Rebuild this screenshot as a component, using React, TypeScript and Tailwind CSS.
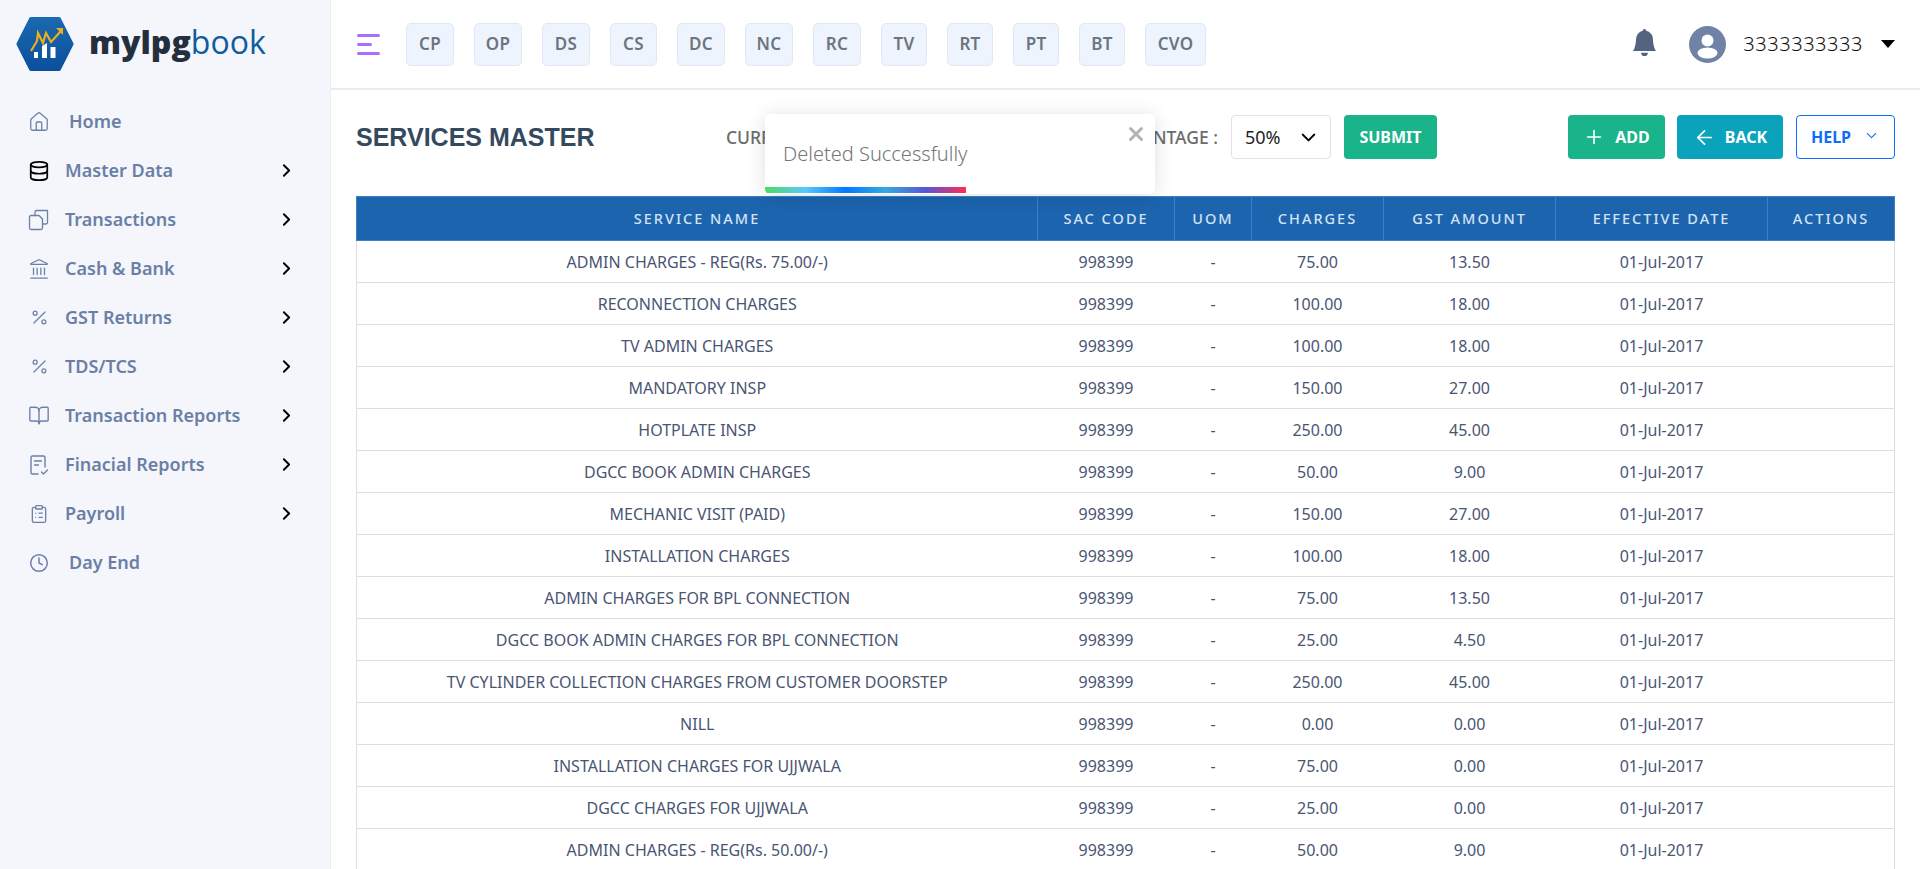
import { ArrowLeft, BookOpen, ChevronDown, ChevronRight, Clock, ClipboardList, Database, House, Landmark, Percent, Plus, X } from "lucide-react"
import { BsBellFill } from "react-icons/bs"

const chips = [
  { label: "CP", w: "w-[48px]" },
  { label: "OP", w: "w-[48px]" },
  { label: "DS", w: "w-[48px]" },
  { label: "CS", w: "w-[47px]" },
  { label: "DC", w: "w-[48px]" },
  { label: "NC", w: "w-[48px]" },
  { label: "RC", w: "w-[48px]" },
  { label: "TV", w: "w-[46px]" },
  { label: "RT", w: "w-[46px]" },
  { label: "PT", w: "w-[46px]" },
  { label: "BT", w: "w-[46px]" },
  { label: "CVO", w: "w-[61px]" },
]

const rows = [
  ["ADMIN CHARGES - REG(Rs. 75.00/-)", "75.00", "13.50"],
  ["RECONNECTION CHARGES", "100.00", "18.00"],
  ["TV ADMIN CHARGES", "100.00", "18.00"],
  ["MANDATORY INSP", "150.00", "27.00"],
  ["HOTPLATE INSP", "250.00", "45.00"],
  ["DGCC BOOK ADMIN CHARGES", "50.00", "9.00"],
  ["MECHANIC VISIT (PAID)", "150.00", "27.00"],
  ["INSTALLATION CHARGES", "100.00", "18.00"],
  ["ADMIN CHARGES FOR BPL CONNECTION", "75.00", "13.50"],
  ["DGCC BOOK ADMIN CHARGES FOR BPL CONNECTION", "25.00", "4.50"],
  ["TV CYLINDER COLLECTION CHARGES FROM CUSTOMER DOORSTEP", "250.00", "45.00"],
  ["NILL", "0.00", "0.00"],
  ["INSTALLATION CHARGES FOR UJJWALA", "75.00", "0.00"],
  ["DGCC CHARGES FOR UJJWALA", "25.00", "0.00"],
  ["ADMIN CHARGES - REG(Rs. 50.00/-)", "50.00", "9.00"],
]

const columns = [
  { label: "SERVICE NAME", w: "w-[681px]" },
  { label: "SAC CODE", w: "w-[137px]" },
  { label: "UOM", w: "w-[77px]" },
  { label: "CHARGES", w: "w-[132px]" },
  { label: "GST AMOUNT", w: "w-[172px]" },
  { label: "EFFECTIVE DATE", w: "w-[212px]" },
  { label: "ACTIONS", w: "w-[127px]" },
]

function ReportIcon() {
  return (
    <svg width="22" height="22" viewBox="0 0 22 22" fill="none" stroke="currentColor" strokeWidth="1.4" strokeLinecap="round" strokeLinejoin="round">
      <path d="M10 20H4.500A1.500 1.500 0 0 1 3 18.500v-15A1.500 1.500 0 0 1 4.500 2h11A1.500 1.500 0 0 1 17 3.500V13" />
      <path d="M6.500 7h7M6.500 11h4M13.500 18l2 2 4-4" />
    </svg>
  )
}

function FilesIcon() {
  return (
    <svg width="22" height="22" viewBox="0 0 22 22" fill="none" stroke="currentColor" strokeWidth="1.3" strokeLinecap="round" strokeLinejoin="round">
      <path d="M7 6.500V3a1.500 1.500 0 0 1 1.500-1.500H14l5.500 0v12a1.500 1.500 0 0 1-1.500 1.500h-3.500" />
      <path d="M7 6.500H3a1.500 1.500 0 0 0-1.500 1.500v11A1.500 1.500 0 0 0 3 20.500h10a1.500 1.500 0 0 0 1.500-1.500V10" />
      <path d="M7 6.500h4l3.500 3.500" />
    </svg>
  )
}

function Logo() {
  return (
    <svg width="58" height="58" viewBox="0 0 58 58">
      <defs>
        <linearGradient id="hex" x1="0" y1="0" x2="0" y2="1">
          <stop offset="0" stopColor="#1b69b0" />
          <stop offset="1" stopColor="#0a4f9c" />
        </linearGradient>
      </defs>
      <path d="M15 1h28a2 2 0 0 1 1.700 1l12.600 25a2 2 0 0 1 0 2l-12.600 25a2 2 0 0 1-1.700 1H15a2 2 0 0 1-1.700-1L.700 29a2 2 0 0 1 0-2l12.600-25a2 2 0 0 1 1.700-1z" fill="url(#hex)" />
      <path d="M18 42h4v-6h-4zM26 42h5V27l-5 3zM34.500 42h5V31h-5z" fill="#fff" />
      <path d="M15 35 21 25l1-8 5 10 3-10 5 9 10-11" fill="none" stroke="#f0ae1c" strokeWidth="2.200" />
      <path d="M40 12h7v7z" fill="#f0ae1c" />
    </svg>
  )
}

function NavItem({ icon, label, arrow, wide }: { icon: React.ReactNode; label: string; arrow?: boolean; wide?: boolean }) {
  return (
    <div className="flex h-[49px] items-center pl-[28px] pr-[33px]">
      <span className={`flex w-[22px] justify-center text-[#6c80a8] ${wide ? "mr-[19px]" : "mr-[15px]"}`}>{icon}</span>
      <span className="flex-1 text-[18px] font-semibold text-[#6b7fa6]">{label}</span>
      {arrow && <ChevronRight size={21} strokeWidth={2.2} className="text-black" />}
    </div>
  )
}

export default function App() {
  return (
    <div className="flex h-screen overflow-hidden bg-white font-['Noto_Sans',sans-serif]">
      <aside className="w-[331px] shrink-0 border-r border-[#e9ecf3] bg-[#f4f6fb]">
        <div className="flex h-[97px] items-start pl-[16px] pt-[16px]">
          <Logo />
          <span className="ml-[15px] mt-[6px] font-['Open_Sans',sans-serif] text-[32px] leading-[40px] text-[#0f5c9e]">
            <span className="font-extrabold text-[#242f3e]">mylpg</span>book
          </span>
        </div>
        <nav>
          <NavItem icon={<House size={22} strokeWidth={1.4} />} label="Home" wide />
          <NavItem icon={<Database size={22} strokeWidth={1.9} className="text-black" />} label="Master Data" arrow />
          <NavItem icon={<FilesIcon />} label="Transactions" arrow />
          <NavItem icon={<Landmark size={22} strokeWidth={1.4} />} label="Cash &amp; Bank" arrow />
          <NavItem icon={<Percent size={19} strokeWidth={1.6} />} label="GST Returns" arrow />
          <NavItem icon={<Percent size={19} strokeWidth={1.6} />} label="TDS/TCS" arrow />
          <NavItem icon={<BookOpen size={23} strokeWidth={1.5} />} label="Transaction Reports" arrow />
          <NavItem icon={<ReportIcon />} label="Finacial Reports" arrow />
          <NavItem icon={<ClipboardList size={20} strokeWidth={1.6} />} label="Payroll" arrow />
          <NavItem icon={<Clock size={20} strokeWidth={1.8} />} label="Day End" wide />
        </nav>
      </aside>

      <div className="min-w-0 flex-1">
        <header className="flex h-[90px] items-center border-b-2 border-[#e9ebf3] pl-[26px] pr-[25px]">
          <div className="mr-[26px] flex w-[23px] flex-col gap-[6px]">
            <span className="h-[3px] w-[23px] rounded bg-[#a970ff]" />
            <span className="h-[3px] w-[15px] rounded bg-[#a970ff]" />
            <span className="h-[3px] w-[23px] rounded bg-[#a970ff]" />
          </div>
          <div className="flex gap-[20px]">
            {chips.map(chip => (
              <span key={chip.label} className={`flex h-[43px] items-center justify-center rounded-[5px] border border-[#e2e8f3] bg-[#eef4fd] text-[17px] font-semibold tracking-[0.3px] text-[#6c757d] ${chip.w}`}>
                {chip.label}
              </span>
            ))}
          </div>
          <div className="ml-auto flex items-center">
            <BsBellFill size={27} className="-mt-[4px] text-[#54647f]" />
            <svg width="37" height="37" viewBox="0 0 37 37" className="ml-[31px]">
              <circle cx="18.500" cy="18.500" r="18.500" fill="#7083a6" />
              <circle cx="18.500" cy="14.500" r="6" fill="#fff" />
              <ellipse cx="18.500" cy="27" rx="10" ry="5.500" fill="#fff" />
            </svg>
            <span className="ml-[17px] text-[20px] font-light tracking-[0.55px] text-[#111]">3333333333</span>
            <span className="ml-[18px] h-0 w-0 border-x-[7.500px] border-t-[8px] border-x-transparent border-t-black" />
          </div>
        </header>

        <main className="relative pl-[25px] pr-[25px]">
          <div className="flex h-[106px] items-start pt-[25px]">
            <h1 className="mt-[6px] w-[370px] font-['Liberation_Sans',sans-serif] text-[25px] font-bold leading-[32px] text-[#34495e]">SERVICES MASTER</h1>
            <span className="mr-[13px] mt-[10px] flex w-[492px] justify-between whitespace-nowrap text-[17.500px] font-medium leading-[24px] text-[#6c6c6c]">
              <span>CURRENT</span>
              <span>GST PERCENTAGE :</span>
            </span>
            <div className="flex h-[44px] w-[100px] items-center justify-between rounded-[4px] border border-[#e2e0f0] pl-[13px] pr-[10px] text-[18px] text-[#222]">
              50%
              <ChevronDown size={23} strokeWidth={2.2} className="text-black" />
            </div>
            <button className="ml-[13px] h-[44px] w-[93px] rounded-[4px] bg-[#19b48a] text-[16px] font-bold text-white">SUBMIT</button>
            <button className="ml-[131px] flex h-[44px] w-[97px] items-center justify-center gap-[10px] rounded-[4px] bg-[#19b48a] text-[16px] font-bold text-white">
              <Plus size={22} strokeWidth={1.8} />ADD
            </button>
            <button className="ml-[12px] flex h-[44px] w-[106px] items-center justify-center gap-[9px] rounded-[4px] bg-[#0aa3bb] text-[16px] font-bold text-white">
              <ArrowLeft size={23} strokeWidth={1.8} />BACK
            </button>
            <button className="ml-[13px] flex h-[44px] w-[99px] items-center justify-center gap-[12px] rounded-[4px] border border-[#0d6efd] text-[16px] font-bold text-[#0d6efd]">
              HELP<ChevronDown size={17} strokeWidth={1.5} className="-mt-[4px]" />
            </button>
          </div>

          <table className="w-[1539px] table-fixed border-collapse text-center">
            <thead>
              <tr className="h-[44px] bg-[#1c64ae] text-[14.500px] font-medium tracking-[2px] text-[#d3e3f5]">
                {columns.map(col => (
                  <th key={col.label} className={`border border-[#3b80c9] font-medium ${col.w}`}>{col.label}</th>
                ))}
              </tr>
            </thead>
            <tbody>
              {rows.map(row => (
                <tr key={row[0]} className="h-[42px] border-x border-b border-[#dedede] text-[16px] text-[#4a5573] [&>td]:pt-[1px]">
                  <td>{row[0]}</td>
                  <td>998399</td>
                  <td>-</td>
                  <td>{row[1]}</td>
                  <td>{row[2]}</td>
                  <td>01-Jul-2017</td>
                  <td></td>
                </tr>
              ))}
            </tbody>
          </table>

          <div className="absolute left-[434px] top-[24px] h-[80px] w-[390px] overflow-hidden rounded-[5px] bg-white shadow-[0_2px_20px_rgba(0,0,0,0.13)]">
            <p className="pl-[18px] pt-[26px] text-[20px] font-light leading-[28px] text-[#757575]">Deleted Successfully</p>
            <X size={22} strokeWidth={3.2} className="absolute right-[8px] top-[9px] text-[#b3b3b3]" />
            <div className="absolute bottom-[1px] left-0 h-[6px] w-[201px] bg-[linear-gradient(to_right,#4cd964,#5ac8fa,#007aff,#34aadc,#5856d6,#ff2d55)]" />
          </div>
        </main>
      </div>
    </div>
  )
}
